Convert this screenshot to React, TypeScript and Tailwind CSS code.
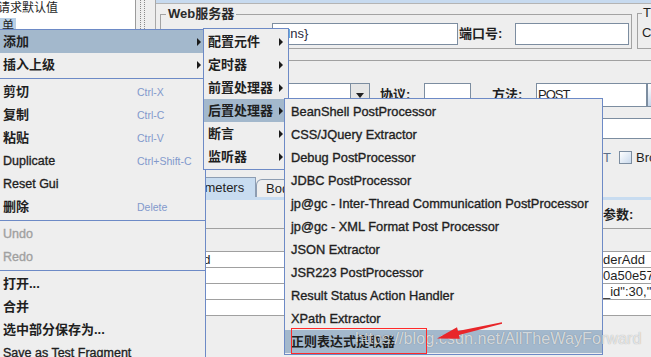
import clsx from "clsx";

type Entry =
  | { sep: true }
  | {
      sep?: false;
      label: string;
      accel?: string;
      arrow?: boolean;
      selected?: boolean;
      disabled?: boolean;
      cjk?: boolean;
    };

const mainItems: Entry[] = [
  { label: "添加", arrow: true, selected: true, cjk: true },
  { label: "插入上级", arrow: true, cjk: true },
  { sep: true },
  { label: "剪切", accel: "Ctrl-X", cjk: true },
  { label: "复制", accel: "Ctrl-C", cjk: true },
  { label: "粘贴", accel: "Ctrl-V", cjk: true },
  { label: "Duplicate", accel: "Ctrl+Shift-C" },
  { label: "Reset Gui" },
  { label: "删除", accel: "Delete", cjk: true },
  { sep: true },
  { label: "Undo", disabled: true },
  { label: "Redo", disabled: true },
  { sep: true },
  { label: "打开...", cjk: true },
  { label: "合并", cjk: true },
  { label: "选中部分保存为...", cjk: true },
  { label: "Save as Test Fragment" },
];

const addItems: Entry[] = [
  { label: "配置元件", arrow: true, cjk: true },
  { label: "定时器", arrow: true, cjk: true },
  { label: "前置处理器", arrow: true, cjk: true },
  { label: "后置处理器", arrow: true, selected: true, cjk: true },
  { label: "断言", arrow: true, cjk: true },
  { label: "监听器", arrow: true, cjk: true },
];

const postItems: Entry[] = [
  { label: "BeanShell PostProcessor" },
  { label: "CSS/JQuery Extractor" },
  { label: "Debug PostProcessor" },
  { label: "JDBC PostProcessor" },
  { label: "jp@gc - Inter-Thread Communication PostProcessor" },
  { label: "jp@gc - XML Format Post Processor" },
  { label: "JSON Extractor" },
  { label: "JSR223 PostProcessor" },
  { label: "Result Status Action Handler" },
  { label: "XPath Extractor" },
  { label: "正则表达式提取器", selected: true, cjk: true },
];

function Arrow() {
  return <span className="h-0 w-0 shrink-0 border-y-[4px] border-l-[4px] border-y-transparent border-l-[#1a1a1a]" />;
}

function Menu({
  items,
  className,
  rowClass,
  labelClass,
  textSize,
}: {
  items: Entry[];
  className: string;
  rowClass: string;
  labelClass?: string;
  textSize: string;
}) {
  return (
    <div className={clsx("absolute border border-[#6d8ac6] bg-[#eeeeee]", className)}>
      {items.map((item, i) =>
        item.sep ? (
          <div key={i} className="h-[4px] pt-[2px]">
            <div className="h-px w-full bg-[#6d8ac6]" />
          </div>
        ) : (
          <div
            key={i}
            className={clsx("flex h-[23px] items-center whitespace-nowrap", rowClass, item.selected && "bg-[#a3b8cc]")}
          >
            <span
              className={clsx(
                "shrink-0",
                labelClass,
                item.cjk ? "text-[13px] font-bold" : clsx(textSize, "[-webkit-text-stroke:0.35px]"),
                item.disabled ? "text-[#a0a0a0]" : "text-[#1f1f1f]"
              )}
            >
              {item.label}
            </span>
            {item.accel && <span className="text-[10.5px] text-[#8299cc]">{item.accel}</span>}
            {item.arrow && (
              <span className="ml-auto flex">
                <Arrow />
              </span>
            )}
          </div>
        )
      )}
    </div>
  );
}

function TreePanel() {
  return (
    <div className="h-full w-[136px] shrink-0 border-r border-[#9b9b9b] bg-white text-[12px]">
      <div className="-ml-[2px] h-[16px] leading-[16px]">请求默认值</div>
      <div className="mt-[2px] h-[16px]">
        <span className="inline-block h-[16px] bg-[#b8cfe5] px-[2px] leading-[16px]">单</span>
      </div>
    </div>
  );
}

function RequestPanel() {
  return (
    <div className="flex h-full min-w-0 flex-1 flex-col border-l border-[#a8a8a8]">
      <div className="h-[4px] border-b border-[#b4b4b4] bg-[#c7daef]" />

      {/* Web服务器 */}
      <div className="mt-[10px] flex items-start pl-[4px]">
        <div className="relative h-[35px] w-[472px] shrink-0 border border-[#a3a3a3]">
          <span className="absolute -top-[9px] left-[5px] bg-[#eeeeee] px-[2px] font-bold leading-[16px] text-[#2a2a2a]">
            Web服务器
          </span>
          <div className="flex h-full items-center pt-[4px]">
            <div className="w-[111px] shrink-0" />
            <div className="flex h-[22px] w-[186px] shrink-0 items-center border border-[#7c8da0] bg-white pl-[10px] text-[#2b2b40]">
              {"dns}"}
            </div>
            <div className="w-[57px] shrink-0 pl-[1px] font-bold">端口号:</div>
            <div className="h-[22px] w-[114px] shrink-0 border border-[#7c8da0] bg-white" />
          </div>
        </div>
        <div className="relative -mt-[1px] ml-[5px] h-[36px] w-[40px] shrink-0 border border-[#a3a3a3]">
          <span className="absolute -top-[9px] left-[4px] bg-[#eeeeee] px-[1px] leading-[16px]">T</span>
          <div className="flex h-full items-center pl-[4px] pt-[4px]">Co</div>
        </div>
      </div>

      <div className="mt-[11px] h-px shrink-0 bg-[#a0a0a0]" />

      {/* 协议 / 方法 */}
      <div className="mt-[22px] flex h-[24px] shrink-0 items-stretch">
        <div className="ml-[60px] w-[134px] shrink-0 border border-r-0 border-[#7c8da0] bg-white" />
        <div className="flex w-[20px] shrink-0 items-center justify-center border border-[#7c8da0] bg-[#e6e6e6]">
          <span className="h-0 w-0 border-x-[4px] border-t-[5px] border-x-transparent border-t-[#222]" />
        </div>
        <div className="ml-[10px] flex w-[44px] shrink-0 items-center font-bold">协议:</div>
        <div className="w-[47px] shrink-0 border border-[#7c8da0] bg-white" />
        <div className="ml-[21px] flex w-[44px] shrink-0 items-center font-bold">方法:</div>
        <div className="flex w-[111px] shrink-0 items-center border border-[#7c8da0] bg-white pl-[1px] tracking-[-1px]">
          POST
        </div>
        <div className="w-[20px] shrink-0 border border-[#7c8da0] bg-gradient-to-b from-white to-[#c5d6ea]" />
      </div>

      {/* 路径 */}
      <div className="ml-[144px] mt-[11px] h-[21px] w-[400px] shrink-0 border border-[#7c8da0] bg-white" />

      {/* options */}
      <div className="mt-[12px] flex h-[13px] shrink-0 items-center">
        <div className="ml-[144px] w-[311px] shrink-0 whitespace-nowrap text-right text-[#5d6f8a]">
          Use multipart/form-data for POST
        </div>
        <div className="ml-[8px] h-[13px] w-[13px] shrink-0 border border-[#7c8da0] bg-gradient-to-br from-white to-[#c9d9ec]" />
        <div className="ml-[4px] shrink-0 whitespace-nowrap">Browser-compatible headers</div>
      </div>

      {/* tabs */}
      <div className="mt-[13px] flex h-[20px] shrink-0 items-end pl-[10px]">
        <div className="flex h-[20px] w-[90px] shrink-0 items-center border border-b-0 border-[#8d9db2] bg-[#c8dcf0] pl-[10px]">
          Parameters
        </div>
        <div className="flex h-[18px] w-[80px] shrink-0 items-center rounded-tl-[6px] border border-b-0 border-[#8d9db2] pl-[9px]">
          Body Data
        </div>
      </div>
      <div className="ml-[6px] h-[3px] shrink-0 bg-[#c8dcf0]" />

      <div className="mt-[7px] flex h-[15px] shrink-0 items-center">
        <span className="ml-[356px] shrink-0 whitespace-nowrap font-bold">同请求一起发送参数:</span>
      </div>
      <div className="mt-[6px] h-px shrink-0 bg-[#a0a0a0]" />
      <div className="h-[22px] shrink-0" />

      <div className="ml-[6px] shrink-0 border-t border-[#a0a0a0] leading-[15px]">
        {[
          ["method", "derAdd"],
          ["", "0a50e57"],
          ["", '_id":30,"s'],
          ["", ""],
        ].map(([name, value], i) => (
          <div key={i} className="flex h-[16px] items-center border-b border-[#a0a0a0] bg-white">
            <div className="w-[438px] shrink-0 whitespace-nowrap pl-[5px]">{name}</div>
            <div className="shrink-0 whitespace-nowrap pl-[3px]">{value}</div>
          </div>
        ))}
      </div>
    </div>
  );
}

export default function App() {
  return (
    <div className="relative h-[357px] w-[651px] overflow-hidden bg-[#eeeeee] font-[family-name:'Liberation_Sans','Noto_Sans_CJK_SC',sans-serif] text-[13px] leading-[16px] text-[#1f1f1f]">
      <div className="flex h-full">
        <TreePanel />
        <div className="h-full w-[19px] shrink-0">
          <div className="ml-[4px] h-full w-[5px] border-x border-dotted border-[#8a8a8a]" />
        </div>
        <RequestPanel />
      </div>

      <Menu
        items={mainItems}
        className="left-[-1px] top-[29px] w-[207px]"
        rowClass="pl-[3px] pr-[4px]"
        labelClass="w-[134px]"
        textSize="text-[12.5px]"
      />
      <Menu items={addItems} className="left-[203px] top-[28px] w-[86px] py-[1px]" rowClass="pl-[4px] pr-[5px]" textSize="text-[13px]" />
      <Menu items={postItems} className="left-[284px] top-[98px] w-[319px] py-[1px]" rowClass="pl-[6px]" textSize="text-[12.8px]" />

      <div className="absolute left-[355px] top-[328px] whitespace-nowrap text-[16.2px] leading-[20px] text-white/70 [text-shadow:0_0_1px_rgba(0,0,0,0.35)]">
        https://blog.csdn.net/AllTheWayForward
      </div>
      <div className="absolute left-[291px] top-[328px] h-[26px] w-[136px] border border-[#ff2a2a]" />
      <svg className="pointer-events-none absolute left-0 top-0" width="651" height="357" viewBox="0 0 651 357">
        <polygon
          points="501.9,322.3 458,331 457,327.2 437,338.5 459.8,338.8 458.9,335 502.1,323.7"
          fill="#e8262a"
        />
      </svg>
    </div>
  );
}
